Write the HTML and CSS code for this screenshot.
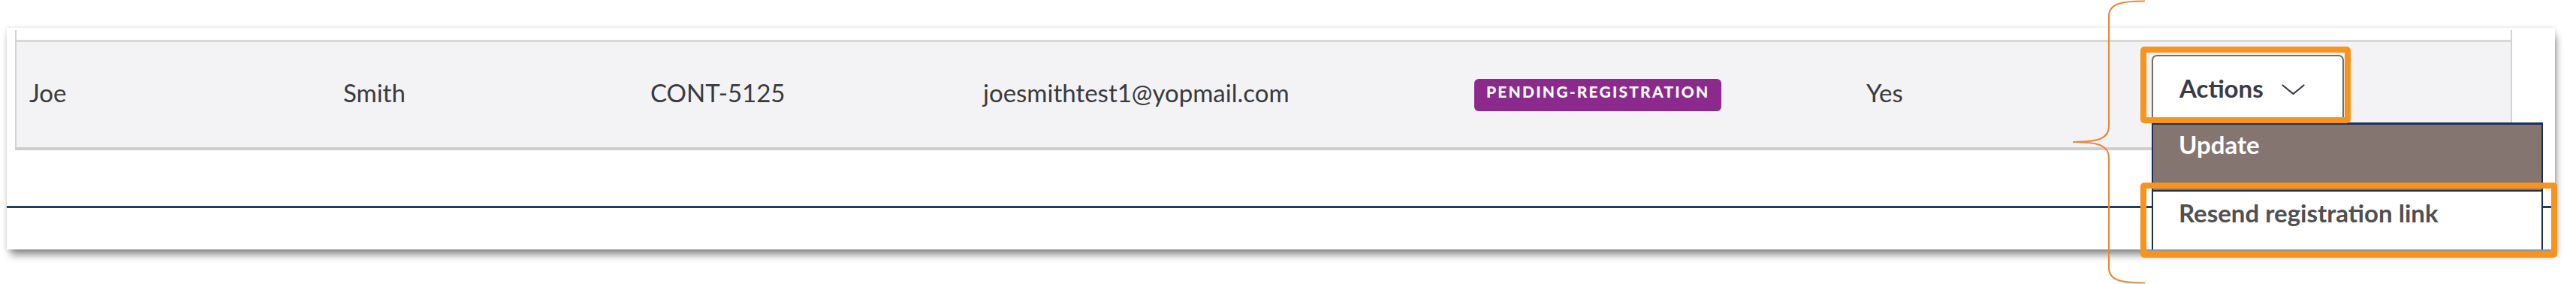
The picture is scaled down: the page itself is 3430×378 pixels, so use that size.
FILE: index.html
```html
<!DOCTYPE html>
<html lang="en">
<head>
<meta charset="utf-8">
<title>Contacts</title>
<link rel="stylesheet" href="styles.css">
</head>
<body>
<div class="stage">
  <div class="card">
    <div class="table">
      <div class="row">
        <div class="cell">Joe</div>
        <div class="cell">Smith</div>
        <div class="cell">CONT-5125</div>
        <div class="cell">joesmithtest1@yopmail.com</div>
        <div class="cell cell-badge"><span class="badge">PENDING-REGISTRATION</span></div>
        <div class="cell">Yes</div>
        <div class="cell cell-actions">
          <div class="dropdown">
            <button class="btn" type="button">
              <span class="btn-label">Actions</span>
              <svg class="chevron" viewBox="0 0 31 15" width="31" height="15" aria-hidden="true">
                <path d="M1.5 1.5 L15.5 13 L29.5 1.5" fill="none" stroke="#3a3a44" stroke-width="2.2" stroke-linecap="round" stroke-linejoin="round"/>
              </svg>
            </button>
            <ul class="menu">
              <li class="menu-item menu-item-active">Update</li>
              <li class="menu-item">Resend registration link</li>
            </ul>
          </div>
        </div>
      </div>
    </div>
    <div class="divider"></div>
  </div>
  <div class="hl hl-actions"></div>
  <div class="hl hl-resend"></div>
  <svg class="brace" viewBox="0 0 120 378" width="120" height="378" aria-hidden="true">
    <path d="M106 1.5 C76 1.5 58 4 58 22 L58 168 C58 184 45 189 10 189 C45 189 58 194 58 210 L58 356 C58 374 76 376.5 106 376.5" fill="none" stroke="#e8893c" stroke-width="2.2"/>
  </svg>
</div>
</body>
</html>
```
FILE: styles.css
```css
html, body {
  margin: 0;
  padding: 0;
  background: #ffffff;
}

body {
  font-family: Lato, "Noto Sans", "Liberation Sans", sans-serif;
  color: #3a3a3c;
}

.stage {
  position: relative;
  width: 3430px;
  height: 378px;
  overflow: hidden;
  padding: 37px 0 0 9px;
  box-sizing: border-box;
}

.card {
  width: 3393px;
  height: 295px;
  background: #ffffff;
  padding-top: 3px;
  box-sizing: border-box;
  overflow: hidden;
  box-shadow: 0 0 6px rgba(0, 0, 0, 0.14), 3px 9px 10px -2px rgba(0, 0, 0, 0.45);
}

.table {
  margin: 0 57px 0 11px;
  padding-top: 13px;
  border-left: 2px solid #d2d2d2;
  border-right: 2px solid #d2d2d2;
}

.row {
  display: grid;
  grid-template-columns: 418px 409px 443px 654px 522px 381px 1fr;
  height: 147px;
  box-sizing: border-box;
  background: #f3f3f5;
  border-top: 3px solid #d8d8d8;
  border-bottom: 4px solid #cdcdcd;
}

.cell {
  display: flex;
  align-items: center;
  padding: 0 0 6px 17px;
  font-size: 33px;
  color: #3a3a3c;
  white-space: nowrap;
}

.cell-badge {
  padding-bottom: 0;
}

.badge {
  display: inline-block;
  box-sizing: border-box;
  width: 329px;
  height: 43px;
  padding: 0 0 10px 16px;
  line-height: 33px;
  border-radius: 6px;
  background: #8b2a8c;
  color: #ffffff;
  font-size: 21px;
  font-weight: 900;
  letter-spacing: 2.2px;
}

.cell-actions {
  align-items: flex-start;
  padding: 17px 0 0 16px;
}

.dropdown {
  position: relative;
}

.btn {
  display: flex;
  align-items: center;
  gap: 24px;
  width: 256px;
  height: 90px;
  box-sizing: border-box;
  padding: 0 0 2px 35px;
  background: #ffffff;
  border: 2px solid #6e6e6e;
  border-radius: 7px;
  font-family: inherit;
  font-size: 33px;
  font-weight: 700;
  color: #3a3a48;
}

.chevron {
  display: block;
  margin-top: 4px;
}

.menu {
  position: absolute;
  top: 100%;
  left: 0;
  z-index: 2;
  width: 521px;
  height: 300px;
  box-sizing: border-box;
  margin: 0;
  padding: 0;
  list-style: none;
  background: #ffffff;
  border: 2px solid #1c2f55;
  border-top-width: 3px;
}

.menu-item {
  box-sizing: border-box;
  padding: 9px 0 0 34px;
  font-size: 33px;
  font-weight: 700;
  color: #505050;
  line-height: 1.2;
  border-top: 2px solid #1c2f55;
}

.menu-item-active {
  height: 87px;
  padding-top: 7px;
  border-top: 0;
  background: #847571;
  color: #ffffff;
}

.divider {
  height: 3px;
  margin: 74px 5px 0 0;
  background: #213d63;
}

.hl {
  position: absolute;
  box-sizing: border-box;
  border: 8px solid #f7941d;
  border-radius: 5px;
  z-index: 5;
}

.hl-actions {
  left: 2850px;
  top: 62px;
  width: 280px;
  height: 102px;
}

.hl-resend {
  left: 2850px;
  top: 243px;
  width: 555px;
  height: 100px;
}

.brace {
  position: absolute;
  left: 2750px;
  top: 0;
  z-index: 6;
}
```
